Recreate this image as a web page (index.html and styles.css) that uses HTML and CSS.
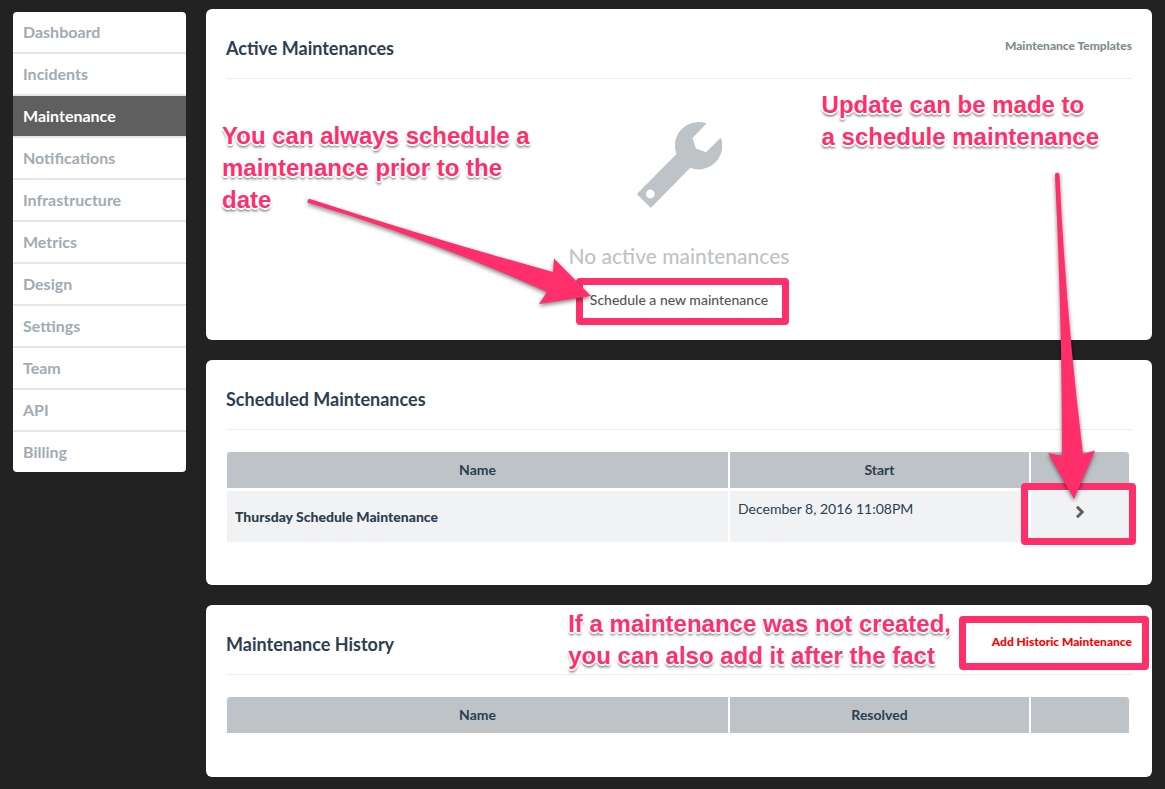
FILE: index.html
```html
<!DOCTYPE html>
<html lang="en">
<head>
<meta charset="utf-8">
<title>Maintenance</title>
<link rel="stylesheet" href="styles.css">
</head>
<body>
<div class="page">
  <nav class="sidebar" aria-label="Main">
    <a class="nav-item" href="#">Dashboard</a>
    <a class="nav-item" href="#">Incidents</a>
    <a class="nav-item active" href="#" aria-current="page">Maintenance</a>
    <a class="nav-item" href="#">Notifications</a>
    <a class="nav-item" href="#">Infrastructure</a>
    <a class="nav-item" href="#">Metrics</a>
    <a class="nav-item" href="#">Design</a>
    <a class="nav-item" href="#">Settings</a>
    <a class="nav-item" href="#">Team</a>
    <a class="nav-item" href="#">API</a>
    <a class="nav-item" href="#">Billing</a>
  </nav>

  <main class="content">
    <section class="panel panel-active">
      <header class="panel-header">
        <h2>Active Maintenances</h2>
        <a class="header-link" href="#">Maintenance Templates</a>
      </header>
      <div class="empty">
        <svg class="wrench" viewBox="0 0 86 86" aria-hidden="true">
          <path fill-rule="evenodd" d="M70.500 1.500 56.500 16 60 26.500 70 30.300 84.800 15.800A23.500 23.500 0 0 1 54.300 45.800L14.800 86 .8 72 40.500 32A23.500 23.500 0 0 1 70.500 1.500ZM14.300 67.600a4.400 4.400 0 1 0 0 8.800a4.400 4.400 0 1 0 0-8.800Z"/>
        </svg>
        <p class="empty-title">No active maintenances</p>
        <a class="empty-link" href="#">Schedule a new maintenance</a>
      </div>
      <p class="note note-schedule">You can always schedule a<br>maintenance prior to the<br>date</p>
      <p class="note note-update">Update can be made to<br>a schedule maintenance</p>
      <div class="frame frame-schedule"></div>
      <svg class="arrow arrow-schedule" viewBox="0 0 290 115" aria-hidden="true">
        <path d="M10 4Q130 43 253 77L254 63.500 291 101 239 109 247 97Q127 43 8.500 8A2.200 2.200 0 0 1 10 4Z"/>
      </svg>
      <svg class="arrow arrow-update" viewBox="0 0 60 335" aria-hidden="true">
        <path d="M15 10Q22 150 22 290.500L8 288 34 334 55 285.500 43 289Q26 150 19.500 10A2.200 2.200 0 0 0 15 10Z"/>
      </svg>
    </section>

    <section class="panel panel-scheduled">
      <header class="panel-header">
        <h2>Scheduled Maintenances</h2>
      </header>
      <table class="grid">
        <colgroup><col class="col-name"><col class="col-date"><col class="col-action"></colgroup>
        <thead>
          <tr><th scope="col">Name</th><th scope="col">Start</th><th></th></tr>
        </thead>
        <tbody>
          <tr>
            <td class="cell-name">Thursday Schedule Maintenance</td>
            <td class="cell-date">December 8, 2016 11:08PM</td>
            <td class="cell-action">
              <a class="open" href="#" aria-label="Open maintenance">
                <svg viewBox="0 0 10 14" aria-hidden="true"><path d="M2 1.800 7.200 7 2 12.200"/></svg>
              </a>
            </td>
          </tr>
        </tbody>
      </table>
      <div class="frame frame-open"></div>
    </section>

    <section class="panel panel-history">
      <header class="panel-header">
        <h2>Maintenance History</h2>
        <a class="header-link add" href="#">Add Historic Maintenance</a>
      </header>
      <table class="grid">
        <colgroup><col class="col-name"><col class="col-date"><col class="col-action"></colgroup>
        <thead>
          <tr><th scope="col">Name</th><th scope="col">Resolved</th><th></th></tr>
        </thead>
      </table>
      <p class="note note-history">If a maintenance was not created,<br>you can also add it after the fact</p>
      <div class="frame frame-history"></div>
    </section>
  </main>
</div>
</body>
</html>
```

FILE: styles.css
```css
* {
  box-sizing: border-box;
}

body {
  margin: 0;
  background: #222;
  color: #2c3e50;
  font-family: Lato, "Liberation Sans", sans-serif;
}

a {
  text-decoration: none;
}

.page {
  display: flex;
  align-items: flex-start;
  gap: 20px;
  padding: 9px 13px 12px;
}

/* Sidebar */
.sidebar {
  flex: 0 0 173px;
  margin-top: 3px;
  background: #fff;
  border-radius: 4px;
  overflow: hidden;
}

.nav-item {
  display: block;
  padding: 0 10px;
  line-height: 40px;
  font-size: 16px;
  font-weight: 700;
  color: #a1abb3;
}

.nav-item + .nav-item {
  border-top: 2px solid #e6e6e6;
}

.nav-item.active {
  background: #5f5f5f;
  color: #fff;
}

/* Panels */
.content {
  flex: 1;
  min-width: 0;
  display: flex;
  flex-direction: column;
  gap: 20px;
}

.panel {
  position: relative;
  padding: 0 20px 43px;
  background: #fff;
  border-radius: 6px;
}

.panel-scheduled {
  z-index: 1;
}

.panel-active {
  z-index: 2;
  padding-bottom: 30px;
}

.panel-header {
  display: flex;
  justify-content: space-between;
  padding-top: 24px;
  height: 70px;
  border-bottom: 1px solid #ececec;
}

.panel-header h2 {
  margin: 0;
  font-size: 18px;
  line-height: 30px;
  font-weight: 700;
}

.header-link {
  font-size: 12px;
  line-height: 26px;
  font-weight: 900;
  color: #7f8c8d;
}

.header-link.add {
  color: #f00;
}

/* Empty state */
.empty {
  display: flex;
  flex-direction: column;
  align-items: center;
  padding-top: 43px;
}

.wrench {
  width: 86px;
  height: 86px;
  fill: #bdc3c7;
}

.empty-title {
  margin: 33px 0 0;
  font-size: 21px;
  line-height: 30px;
  font-weight: 500;
  color: #bdc3c7;
}

.empty-link {
  margin-top: 19px;
  font-size: 14px;
  line-height: 20px;
  font-weight: 500;
  color: #555;
}

/* Tables */
.grid {
  width: calc(100% - 2px);
  margin-top: 21px;
  border-collapse: separate;
  border-spacing: 0;
  table-layout: fixed;
  font-size: 14px;
  line-height: 20px;
}

.col-date {
  width: 301px;
}

.col-action {
  width: 100px;
}

.grid th,
.grid td {
  border: solid #fff;
}

.grid th {
  height: 38px;
  padding: 0 8px;
  border-width: 1px;
  background: #bdc3c7;
  font-weight: 700;
}

.grid td {
  height: 53px;
  padding: 8px;
  border-width: 2px 1px 0;
  background: #f0f2f4;
}

.grid th:first-child {
  border-top-left-radius: 4px;
}

.grid th:last-child {
  border-top-right-radius: 4px;
}

.cell-name {
  font-weight: 900;
}

.grid .cell-date {
  vertical-align: top;
}

.grid .cell-action {
  vertical-align: top;
  text-align: center;
}

.open {
  display: inline-block;
  padding-top: 6px;
}

.open svg {
  display: block;
  width: 10px;
  height: 14px;
  fill: none;
  stroke: #5f5f5f;
  stroke-width: 3;
}

/* Callouts drawn over the panels */
.note {
  position: absolute;
  margin: 0;
  font-family: "Liberation Sans", Arial, sans-serif;
  font-size: 24px;
  line-height: 32px;
  font-weight: 700;
  color: #ff2f6c;
  white-space: nowrap;
  text-shadow: 2px 0 #fff, -2px 0 #fff, 0 2px #fff, 0 -2px #fff,
    1px 1px #fff, -1px 1px #fff, 1px -1px #fff, -1px -1px #fff,
    0 3px 3px rgba(0, 0, 0, 0.7);
}

.note-schedule {
  top: 111px;
  left: 16px;
}

.note-update {
  top: 80px;
  right: 53px;
}

.note-history {
  top: 3px;
  right: 201px;
}

.frame {
  position: absolute;
  border: 7px solid #ff2f6c;
  border-radius: 4px;
}

.frame-schedule {
  top: 269px;
  left: calc(50% - 103px);
  width: 213px;
  height: 47px;
}

.frame-open {
  top: 123px;
  right: 16px;
  width: 115px;
  height: 62px;
}

.frame-history {
  top: 11px;
  right: 3px;
  width: 190px;
  height: 54px;
}

.arrow {
  position: absolute;
  overflow: visible;
  fill: #ff2f6c;
  filter: drop-shadow(0 2px 2px rgba(0, 0, 0, 0.5));
}

.arrow-schedule {
  top: 186px;
  left: calc(50% - 379px);
  width: 290px;
  height: 115px;
}

.arrow-update {
  top: 156px;
  right: 52px;
  width: 60px;
  height: 335px;
}
```
